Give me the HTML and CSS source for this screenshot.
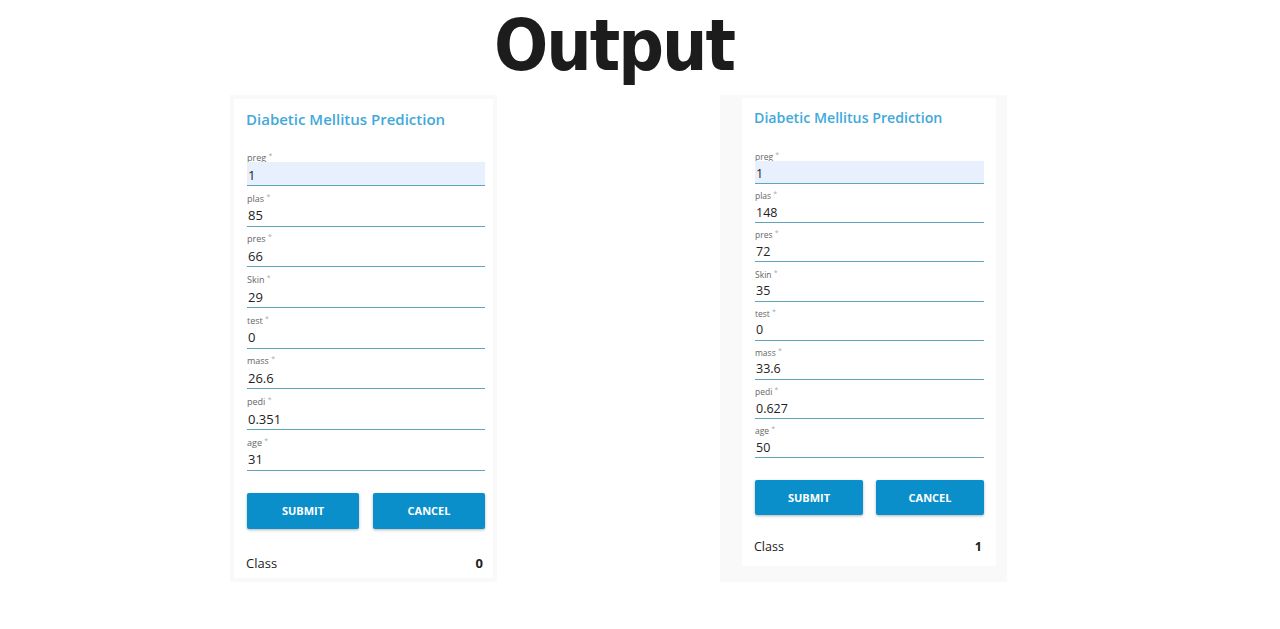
FILE: index.html
```html
<!DOCTYPE html>
<html lang="en">
<head>
  <meta charset="UTF-8" />
  <title>Output</title>
  <link rel="stylesheet" href="styles.css">
</head>
<body>

  <h1 class="title">Output</h1>

  <div class="shots">

    <!-- FIRST RUN -->
    <div class="shot shot-a">
      <form class="card card-a">
        <h2>Diabetic Mellitus Prediction</h2>
        <label class="field"><span class="label">preg <i>*</i></span><input class="filled" type="text" value="1" /></label>
        <label class="field"><span class="label">plas <i>*</i></span><input type="text" value="85" /></label>
        <label class="field"><span class="label">pres <i>*</i></span><input type="text" value="66" /></label>
        <label class="field"><span class="label">Skin <i>*</i></span><input type="text" value="29" /></label>
        <label class="field"><span class="label">test <i>*</i></span><input type="text" value="0" /></label>
        <label class="field"><span class="label">mass <i>*</i></span><input type="text" value="26.6" /></label>
        <label class="field"><span class="label">pedi <i>*</i></span><input type="text" value="0.351" /></label>
        <label class="field"><span class="label">age <i>*</i></span><input type="text" value="31" /></label>
        <div class="actions">
          <button type="button">Submit</button>
          <button type="button">Cancel</button>
        </div>
        <div class="result"><span>Class</span><b>0</b></div>
      </form>
    </div>

    <!-- SECOND RUN -->
    <div class="shot shot-b">
      <form class="card card-b">
        <h2>Diabetic Mellitus Prediction</h2>
        <label class="field"><span class="label">preg <i>*</i></span><input class="filled" type="text" value="1" /></label>
        <label class="field"><span class="label">plas <i>*</i></span><input type="text" value="148" /></label>
        <label class="field"><span class="label">pres <i>*</i></span><input type="text" value="72" /></label>
        <label class="field"><span class="label">Skin <i>*</i></span><input type="text" value="35" /></label>
        <label class="field"><span class="label">test <i>*</i></span><input type="text" value="0" /></label>
        <label class="field"><span class="label">mass <i>*</i></span><input type="text" value="33.6" /></label>
        <label class="field"><span class="label">pedi <i>*</i></span><input type="text" value="0.627" /></label>
        <label class="field"><span class="label">age <i>*</i></span><input type="text" value="50" /></label>
        <div class="actions">
          <button type="button">Submit</button>
          <button type="button">Cancel</button>
        </div>
        <div class="result"><span>Class</span><b>1</b></div>
      </form>
    </div>

  </div>

</body>
</html>
```

FILE: styles.css
```css
* {
  box-sizing: border-box;
}
body {
  margin: 0;
  background: #fff;
  font-family: 'Open Sans', 'Noto Sans', sans-serif;
  color: #222;
}

.title {
  width: 777px;
  height: 95px;
  margin: 0 0 0 230px;
  padding: 10px 9px 0 0;
  text-align: center;
  font-family: 'DejaVu Sans', sans-serif;
  font-stretch: condensed;
  font-weight: bold;
  font-size: 71px;
  line-height: 71px;
  letter-spacing: -2px;
  color: #1c1c1c;
}

.shots {
  display: flex;
  gap: 223px;
  margin-left: 230px;
}

.shot {
  height: 487px;
  background: #f9f9f9;
}
.shot-a {
  width: 267px;
  padding: 4px;
}
.shot-b {
  width: 287px;
  padding: 3px 11px 16px 22px;
}

.card {
  height: 100%;
  background: #fff;
  display: flex;
  flex-direction: column;
  padding: 10px 12px 0 12px;
}
.card-a {
  padding-right: 8px;
}

h2 {
  margin: 0 0 20px;
  font-size: 15px;
  line-height: 20px;
  font-weight: 600;
  color: #3fa9da;
}
.card-b h2 {
  font-size: 14.2px;
  margin-bottom: 21px;
}

.field {
  display: flex;
  flex-direction: column;
  margin: 0 0 3.7px 1px;
}
.card-b .field {
  margin-bottom: 4.2px;
}

.label {
  height: 13px;
  font-size: 9px;
  line-height: 18px;
  color: #666;
}
.label i {
  font-style: normal;
  font-size: 7px;
  vertical-align: top;
  line-height: 14px;
  color: #aaa;
}
.card-b .label {
  height: 12px;
  line-height: 16px;
  font-size: 8.5px;
}
.card-b .label i {
  line-height: 12px;
}

.field input {
  height: 24px;
  padding: 2px 1px 0;
  border: none;
  border-bottom: 1.5px solid #5ea5bb;
  outline: none;
  background: transparent;
  font-family: inherit;
  font-size: 13px;
  color: #222;
}
.card-b .field input {
  height: 23px;
  font-size: 12.5px;
}
.field input.filled {
  background: #e8f0fe;
}

.actions {
  display: flex;
  gap: 14px;
  margin: 18.3px 0 0 1px;
}
.card-b .actions {
  gap: 13px;
  margin-top: 17.6px;
}
.actions button {
  flex: 1;
  height: 36px;
  border: none;
  border-radius: 2px;
  background: #0a8fcb;
  color: #fff;
  font-family: inherit;
  font-size: 11px;
  font-weight: 700;
  text-transform: uppercase;
  box-shadow: 0 1px 3px rgba(0,0,0,0.3);
}
.card-b .actions button {
  height: 35px;
}

.result {
  display: flex;
  justify-content: space-between;
  margin-top: 24px;
  padding-right: 2px;
  font-size: 13px;
  line-height: 20px;
}
.card-b .result {
  margin-top: 22px;
  font-size: 12.5px;
}
.result b {
  font-weight: 700;
}
```
